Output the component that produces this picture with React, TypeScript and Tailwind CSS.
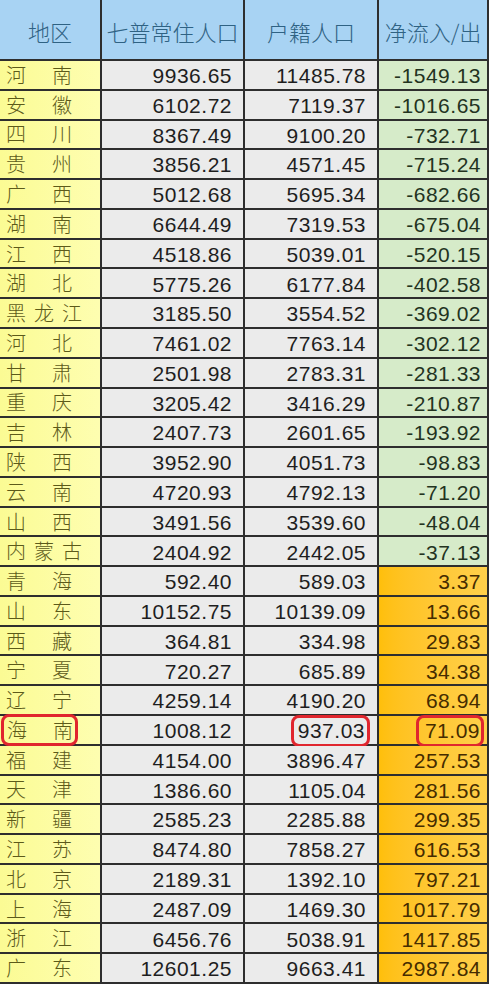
import React from 'react'

type Row = { name: string; resident: string; registered: string; net: string; mark?: boolean }

const rows: Row[] = [
  { name: '河南', resident: '9936.65', registered: '11485.78', net: '-1549.13' },
  { name: '安徽', resident: '6102.72', registered: '7119.37', net: '-1016.65' },
  { name: '四川', resident: '8367.49', registered: '9100.20', net: '-732.71' },
  { name: '贵州', resident: '3856.21', registered: '4571.45', net: '-715.24' },
  { name: '广西', resident: '5012.68', registered: '5695.34', net: '-682.66' },
  { name: '湖南', resident: '6644.49', registered: '7319.53', net: '-675.04' },
  { name: '江西', resident: '4518.86', registered: '5039.01', net: '-520.15' },
  { name: '湖北', resident: '5775.26', registered: '6177.84', net: '-402.58' },
  { name: '黑龙江', resident: '3185.50', registered: '3554.52', net: '-369.02' },
  { name: '河北', resident: '7461.02', registered: '7763.14', net: '-302.12' },
  { name: '甘肃', resident: '2501.98', registered: '2783.31', net: '-281.33' },
  { name: '重庆', resident: '3205.42', registered: '3416.29', net: '-210.87' },
  { name: '吉林', resident: '2407.73', registered: '2601.65', net: '-193.92' },
  { name: '陕西', resident: '3952.90', registered: '4051.73', net: '-98.83' },
  { name: '云南', resident: '4720.93', registered: '4792.13', net: '-71.20' },
  { name: '山西', resident: '3491.56', registered: '3539.60', net: '-48.04' },
  { name: '内蒙古', resident: '2404.92', registered: '2442.05', net: '-37.13' },
  { name: '青海', resident: '592.40', registered: '589.03', net: '3.37' },
  { name: '山东', resident: '10152.75', registered: '10139.09', net: '13.66' },
  { name: '西藏', resident: '364.81', registered: '334.98', net: '29.83' },
  { name: '宁夏', resident: '720.27', registered: '685.89', net: '34.38' },
  { name: '辽宁', resident: '4259.14', registered: '4190.20', net: '68.94' },
  { name: '海南', resident: '1008.12', registered: '937.03', net: '71.09', mark: true },
  { name: '福建', resident: '4154.00', registered: '3896.47', net: '257.53' },
  { name: '天津', resident: '1386.60', registered: '1105.04', net: '281.56' },
  { name: '新疆', resident: '2585.23', registered: '2285.88', net: '299.35' },
  { name: '江苏', resident: '8474.80', registered: '7858.27', net: '616.53' },
  { name: '北京', resident: '2189.31', registered: '1392.10', net: '797.21' },
  { name: '上海', resident: '2487.09', registered: '1469.30', net: '1017.79' },
  { name: '浙江', resident: '6456.76', registered: '5038.91', net: '1417.85' },
  { name: '广东', resident: '12601.25', registered: '9663.41', net: '2987.84' },
]

const cjk = "font-['Noto_Sans_CJK_SC',sans-serif] font-light"
const num = "font-['Liberation_Sans',Arial,sans-serif] text-[21px] tracking-[0.5px]"
const head = `flex items-center justify-center pt-1 bg-[#a8d3f3] text-[22px] text-[#2f6283] ${cjk}`

function Name({ name }: { name: string }) {
  const chars = name.split('')
  return (
    <div className={`flex justify-between ${chars.length === 3 ? 'w-[76px]' : 'w-[66px]'}`}>
      {chars.map((c, i) => (
        <span key={i}>{c}</span>
      ))}
    </div>
  )
}

export default function App() {
  return (
    <div className="w-[493px] h-[1000px] bg-white">
      <div className="w-[489px] h-[984px] bg-[#2e2e2e] pr-[2px] pb-[2px]">
        <div className="grid h-full grid-cols-[100px_141px_132px_108px] grid-rows-[59px_repeat(31,minmax(0,1fr))] gap-[2px]">
          {/* 表头 */}
          <div className={head}>地区</div>
          <div className={head}>七普常住人口</div>
          <div className={head}>户籍人口</div>
          <div className={head}>净流入/出</div>

          {rows.map((r) => {
            const positive = !r.net.startsWith('-')
            return (
              <React.Fragment key={r.name}>
                <div className={`flex items-center bg-gradient-to-r from-[#fbfb94] to-[#fefeb0] text-[20px] text-[#5c5a1a] ${cjk}`}>
                  {r.mark ? (
                    <div className="flex items-center h-[32px] -my-[2px] ml-[1px] pl-[3px] pr-[2px] border-[3px] border-[#e0262e] rounded-[8px]">
                      <Name name={r.name} />
                    </div>
                  ) : (
                    <div className="pl-[6px]">
                      <Name name={r.name} />
                    </div>
                  )}
                </div>
                <div className={`flex items-center justify-end pr-[11px] pt-[2px] bg-[#ebebeb] text-[#1e1e1e] ${num}`}>
                  {r.resident}
                </div>
                <div className={`flex items-center justify-end pt-[2px] bg-[#ebebeb] text-[#1e1e1e] ${num} ${r.mark ? 'pr-[7px]' : 'pr-[11px]'}`}>
                  {r.mark ? (
                    <span className="flex items-center h-[32px] -my-[2px] pl-[4px] pr-[2px] border-[3px] border-[#e0262e] rounded-[8px]">
                      {r.registered}
                    </span>
                  ) : (
                    r.registered
                  )}
                </div>
                <div
                  className={`flex items-center justify-end pt-[2px] ${num} ${
                    positive
                      ? 'bg-gradient-to-r from-[#ffbf0a] to-[#ffd04a] text-[#452c00]'
                      : 'bg-[#d6ebc9] text-[#23331f]'
                  } ${r.mark ? 'pr-[3px]' : 'pr-[6px]'}`}
                >
                  {r.mark ? (
                    <span className="flex items-center h-[32px] -my-[2px] pl-[6px] pr-[1px] border-[3px] border-[#e0262e] rounded-[8px]">
                      {r.net}
                    </span>
                  ) : (
                    r.net
                  )}
                </div>
              </React.Fragment>
            )
          })}
        </div>
      </div>
    </div>
  )
}
